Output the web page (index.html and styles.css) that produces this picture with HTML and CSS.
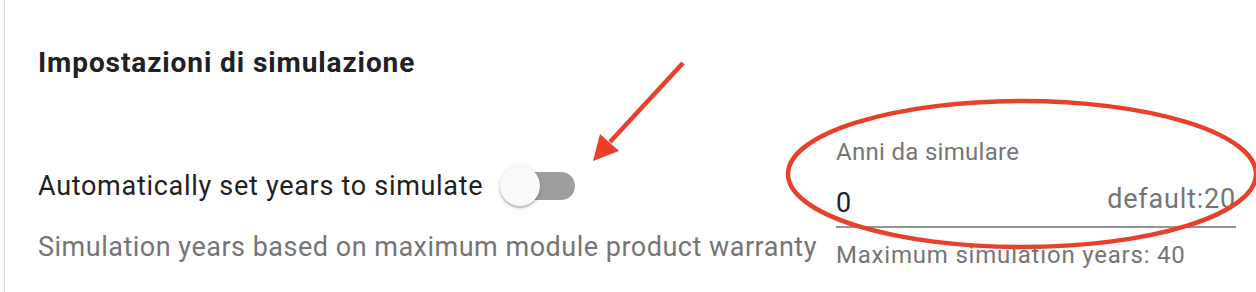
FILE: index.html
```html
<!DOCTYPE html>
<html lang="it">
<head>
<meta charset="utf-8">
<title>Impostazioni di simulazione</title>
<link rel="stylesheet" href="styles.css">
</head>
<body>
<div class="card">
  <h2 class="title">Impostazioni di simulazione</h2>
  <div class="settings">
    <div class="left">
      <div class="label-row">
        <span class="label">Automatically set years to simulate</span>
        <span class="switch"><span class="track"></span><span class="thumb"></span></span>
      </div>
      <div class="desc">Simulation years based on maximum module product warranty</div>
    </div>
    <div class="field">
      <div class="field-label">Anni da simulare</div>
      <div class="field-input">
        <span class="value">0</span>
        <span class="suffix">default:20</span>
      </div>
      <div class="helper">Maximum simulation years: 40</div>
    </div>
  </div>
</div>
<svg class="annot" width="1256" height="292" viewBox="0 0 1256 292">
  <line x1="683" y1="63" x2="610" y2="142" stroke="#e8402a" stroke-width="4.5" stroke-linecap="butt"/>
  <polygon points="593,161 600,134 619,151" fill="#e8402a"/>
  <ellipse cx="1022" cy="174" rx="234" ry="73" fill="none" stroke="#e8402a" stroke-width="4.5"/>
</svg>
</body>
</html>
```
FILE: styles.css
```css
html, body {
  margin: 0;
  padding: 0;
  background: #fff;
}
body {
  width: 1256px;
  height: 292px;
  overflow: hidden;
  position: relative;
  font-family: Roboto, "Liberation Sans", sans-serif;
}
.card {
  margin-left: 5px;
  height: 320px;
  margin-top: -20px;
  padding: 69px 0 0 33px;
  box-sizing: border-box;
  background: #fff;
  box-shadow: -1px 0 3px rgba(0,0,0,0.12), -1px 0 1px rgba(0,0,0,0.06);
}
.title {
  margin: 0;
  font-size: 28px;
  line-height: 28px;
  font-weight: 700;
  letter-spacing: 0.9px;
  color: #212121;
}
.settings {
  display: flex;
  margin-top: 89px;
}
.left {
  display: flex;
  flex-direction: column;
  width: 798px;
}
.label-row {
  display: flex;
  align-items: center;
  gap: 17px;
  height: 40px;
}
.label {
  font-size: 27px;
  line-height: 40px;
  letter-spacing: 0.7px;
  color: #212121;
}
.switch {
  position: relative;
  width: 75px;
  height: 40px;
  display: inline-block;
}
.track {
  position: absolute;
  left: 8px;
  top: 6px;
  width: 67px;
  height: 28px;
  border-radius: 14px;
  background: #9e9e9e;
}
.thumb {
  position: absolute;
  left: 0;
  top: 0;
  width: 40px;
  height: 40px;
  border-radius: 50%;
  background: #fafafa;
  box-shadow: 0 2px 2px rgba(0,0,0,0.22), 0 1px 5px rgba(0,0,0,0.14);
}
.desc {
  margin-top: 26px;
  font-size: 27px;
  line-height: 30px;
  letter-spacing: 0.5px;
  color: #757575;
}
.field {
  width: 400px;
  margin-top: -26px;
  display: flex;
  flex-direction: column;
}
.field-label {
  font-size: 24px;
  line-height: 24px;
  letter-spacing: 0.3px;
  color: #757575;
}
.field-input {
  display: flex;
  justify-content: space-between;
  align-items: flex-end;
  margin-top: 20px;
  height: 44px;
  border-bottom: 2px solid #949494;
  box-sizing: border-box;
  padding-bottom: 8px;
}
.value {
  font-size: 27px;
  line-height: 30px;
  color: #212121;
}
.suffix {
  font-size: 27px;
  line-height: 30px;
  letter-spacing: 0.8px;
  color: #757575;
  padding-bottom: 4px;
}
.helper {
  margin-top: 15px;
  font-size: 24px;
  line-height: 24px;
  letter-spacing: 0.8px;
  color: #757575;
}
.annot {
  position: absolute;
  left: 0;
  top: 0;
  pointer-events: none;
}
```
